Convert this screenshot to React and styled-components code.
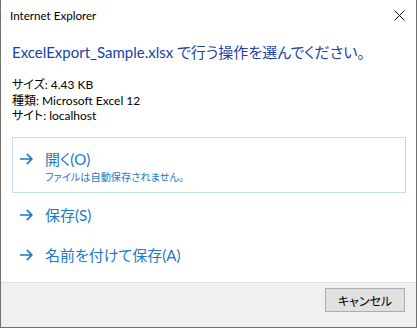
import React from 'react';
import styled, { createGlobalStyle } from 'styled-components';

const GlobalStyle = createGlobalStyle`
  html, body {
    margin: 0;
    padding: 0;
    background: #ffffff;
  }
  body {
    font-family: Lato, "Noto Sans CJK JP", sans-serif;
    font-feature-settings: "palt";
  }
`;

const Window = styled.div`
  box-sizing: border-box;
  width: 417px;
  height: 328px;
  display: flex;
  flex-direction: column;
  background: #ffffff;
  border: 1px solid #707070;
  border-top: none;
`;

const TitleBar = styled.div`
  height: 30px;
  display: flex;
  align-items: center;
  justify-content: space-between;
  padding: 0 8px 0 9px;
  font-size: 11.6px;
  color: #000000;
`;

const CloseButton = styled.div`
  width: 14px;
  height: 14px;
  display: flex;
  align-items: center;
  justify-content: center;
  margin-right: 2px;
`;

const Content = styled.div`
  flex: 1;
  padding: 12px 10px 0 11px;
`;

const Heading = styled.div`
  font-size: 15px;
  line-height: 20px;
  color: #1a3fa6;
  white-space: nowrap;
`;

const Info = styled.div`
  margin-top: 15px;
  font-size: 12px;
  line-height: 15.5px;
  color: #000000;
`;

const OptionList = styled.div`
  margin-top: 13px;
  display: flex;
  flex-direction: column;
`;

const Option = styled.div`
  display: flex;
  align-items: flex-start;
  gap: 12px;
  padding: 11px 0 7px 7px;
  border: 1px solid ${p => (p.$active ? '#c4dcf2' : 'transparent')};
  color: #1979ca;
`;

const Arrow = styled.svg`
  flex: none;
  width: 13px;
  height: 12px;
  margin-top: 4px;
`;

const OptionText = styled.div`
  display: flex;
  flex-direction: column;
`;

const OptionTitle = styled.div`
  font-size: 15px;
  line-height: 20px;
`;

const OptionNote = styled.div`
  font-size: 10.2px;
  line-height: 16px;
`;

const Footer = styled.div`
  height: 39px;
  display: flex;
  justify-content: flex-end;
  align-items: flex-start;
  padding: 5px 11px 0 0;
  background: #f0f0f0;
  border-top: 1px solid #dfdfdf;
`;

const Button = styled.button`
  width: 80px;
  height: 24px;
  padding: 0;
  background: #e1e1e1;
  border: 1px solid #adadad;
  font-family: Lato, "Noto Sans CJK JP", sans-serif;
  font-feature-settings: "palt";
  font-size: 12px;
  color: #000000;
`;

const ArrowIcon = () => (
  <Arrow viewBox="0 0 13 12">
    <path d="M0 6H12M6.8 0.9L11.9 6L6.8 11.1" fill="none" stroke="#1979ca" strokeWidth="1.7" />
  </Arrow>
);

const options = [
  { title: '開く(O)', note: 'ファイルは自動保存されません。', active: true },
  { title: '保存(S)' },
  { title: '名前を付けて保存(A)' },
];

export default function App() {
  return (
    <>
      <GlobalStyle />
      <Window>
        <TitleBar>
          <span>Internet Explorer</span>
          <CloseButton>
            <svg width="11" height="11" viewBox="0 0 11 11">
              <path d="M0.5 0.5L10.5 10.5M10.5 0.5L0.5 10.5" stroke="#111" strokeWidth="1" fill="none" />
            </svg>
          </CloseButton>
        </TitleBar>
        <Content>
          <Heading>ExcelExport_Sample.xlsx で行う操作を選んでください。</Heading>
          <Info>
            <div>サイズ: 4.43 KB</div>
            <div>種類: Microsoft Excel 12</div>
            <div>サイト: localhost</div>
          </Info>
          <OptionList>
            {options.map(o => (
              <Option key={o.title} $active={o.active}>
                <ArrowIcon />
                <OptionText>
                  <OptionTitle>{o.title}</OptionTitle>
                  {o.note && <OptionNote>{o.note}</OptionNote>}
                </OptionText>
              </Option>
            ))}
          </OptionList>
        </Content>
        <Footer>
          <Button>キャンセル</Button>
        </Footer>
      </Window>
    </>
  );
}
